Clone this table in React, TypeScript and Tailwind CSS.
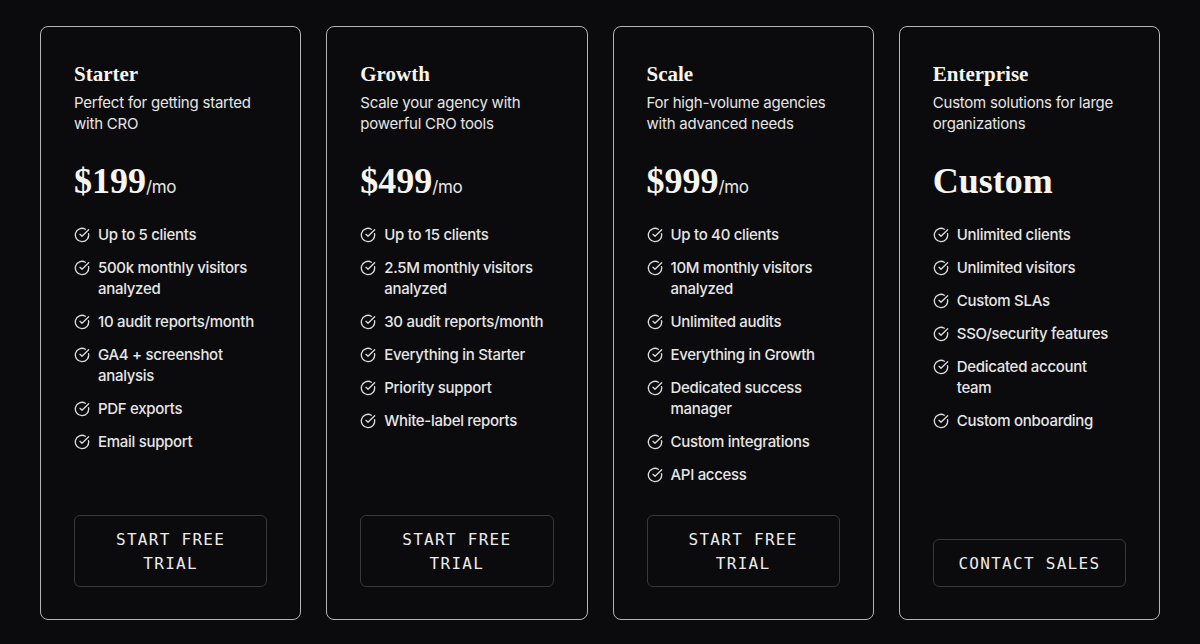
import * as React from "react";
import { CircleCheckBig } from "lucide-react";

type Plan = {
  name: string;
  description: string;
  price: string;
  suffix?: string;
  features: string[];
  cta: string;
};

const plans: Plan[] = [
  {
    name: "Starter",
    description: "Perfect for getting started with CRO",
    price: "$199",
    suffix: "/mo",
    features: [
      "Up to 5 clients",
      "500k monthly visitors analyzed",
      "10 audit reports/month",
      "GA4 + screenshot analysis",
      "PDF exports",
      "Email support",
    ],
    cta: "START FREE TRIAL",
  },
  {
    name: "Growth",
    description: "Scale your agency with powerful CRO tools",
    price: "$499",
    suffix: "/mo",
    features: [
      "Up to 15 clients",
      "2.5M monthly visitors analyzed",
      "30 audit reports/month",
      "Everything in Starter",
      "Priority support",
      "White-label reports",
    ],
    cta: "START FREE TRIAL",
  },
  {
    name: "Scale",
    description: "For high-volume agencies with advanced needs",
    price: "$999",
    suffix: "/mo",
    features: [
      "Up to 40 clients",
      "10M monthly visitors analyzed",
      "Unlimited audits",
      "Everything in Growth",
      "Dedicated success manager",
      "Custom integrations",
      "API access",
    ],
    cta: "START FREE TRIAL",
  },
  {
    name: "Enterprise",
    description: "Custom solutions for large organizations",
    price: "Custom",
    features: [
      "Unlimited clients",
      "Unlimited visitors",
      "Custom SLAs",
      "SSO/security features",
      "Dedicated account team",
      "Custom onboarding",
    ],
    cta: "CONTACT SALES",
  },
];

const serif = "font-['Liberation_Serif',serif]";
const sans = "font-['Inter',sans-serif]";
const mono = "font-['DejaVu_Sans_Mono',monospace]";

function PlanCard({ plan }: { plan: Plan }) {
  return (
    <div className="flex flex-col rounded-lg border border-[#b4b4b4] bg-[#0b0b0d] px-[33px] pt-[33px] pb-[32px]">
      <h3 className={`${serif} text-[21px] font-bold leading-[28px] text-[#f7f5ef]`}>
        {plan.name}
      </h3>
      <p className={`${sans} mt-1 text-[15px] leading-[21px] tracking-[-0.015em] text-[#e6e6e6]`}>
        {plan.description}
      </p>
      <div className="mt-[25px] flex items-baseline">
        <span className={`${serif} text-[36px] font-bold leading-[44px] text-[#f7f5ef]`}>
          {plan.price}
        </span>
        {plan.suffix && (
          <span className={`${sans} text-[17px] tracking-[-0.02em] text-[#e6e6e6]`}>
            {plan.suffix}
          </span>
        )}
      </div>
      <ul className="mt-[21px] flex flex-col gap-3 pr-1">
        {plan.features.map((f) => (
          <li key={f} className="flex items-start gap-2">
            <CircleCheckBig
              className="mt-[3px] size-[16px] shrink-0 text-[#dcdcdc]"
              strokeWidth={2}
            />
            <span
              className={`${sans} text-[15px] font-medium leading-[21px] tracking-[-0.02em] text-[#e6e6e6]`}
            >
              {f}
            </span>
          </li>
        ))}
      </ul>
      <button
        className={`${mono} mt-auto rounded-md border border-[#38383b] bg-[#0b0b0d] px-6 pt-3 pb-[10px] text-[16px] leading-[24px] tracking-[0.08em] text-[#ececec]`}
      >
        {plan.cta}
      </button>
    </div>
  );
}

export default function App() {
  return (
    <div className="h-[644px] w-[1200px] bg-[#0b0b0d] px-10 pt-[26px] pb-[24px]">
      <div className="grid h-full grid-cols-4 gap-[25px]">
        {plans.map((p) => (
          <PlanCard key={p.name} plan={p} />
        ))}
      </div>
    </div>
  );
}
